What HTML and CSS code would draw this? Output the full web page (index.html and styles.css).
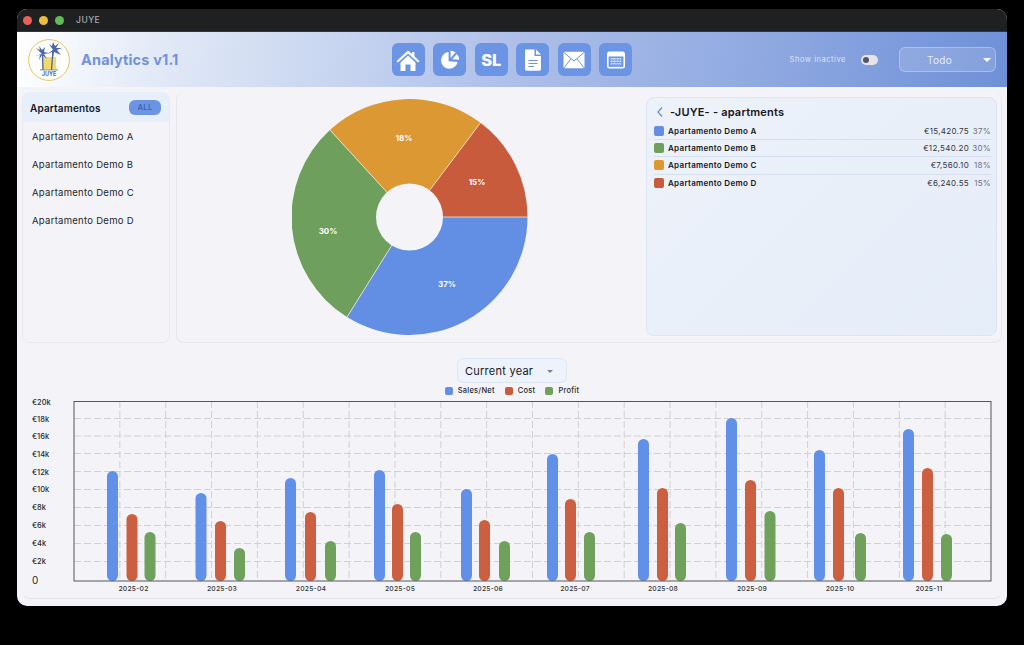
FILE: index.html
```html
<!DOCTYPE html>
<html lang="en">
<head>
<meta charset="utf-8">
<title>JUYE Analytics</title>
<link rel="stylesheet" href="styles.css">
</head>
<body>
<div class="window">
  <div class="titlebar">
    <span class="dot dot-red"></span><span class="dot dot-yellow"></span><span class="dot dot-green"></span>
    <span class="app-name">JUYE</span>
  </div>
  <header class="header">
    <div class="brand">
      <svg class="logo" viewBox="0 0 42 42">
        <circle cx="21" cy="21" r="20.4" fill="#fff" stroke="#e3c65a" stroke-width="1"/>
        <rect x="14" y="18" width="14" height="12" fill="#f2d968"/>
        <path d="M14.5 15 L15 31 M25 11 L23.5 31" stroke="#4d67a8" stroke-width="1.3" fill="none"/>
        <path d="M14 15 L8 9 L12 11 L11 7 L14 11 L17 8 L16 13 L21 14 L16 15 L19 20 L14 16 L11 21 L12 16 L7 17 Z" fill="#4d67a8"/>
        <path d="M25 11 L21 5 L24 7 L25 3 L27 7 L31 4 L28 9 L34 9 L29 11 L33 16 L26 13 L25 19 L24 13 L19 15 Z" fill="#4d67a8"/>
        <rect x="12" y="30.5" width="18" height="0.8" fill="#4d67a8"/>
        <text x="21" y="37" class="logo-text" text-anchor="middle">JUYE</text>
      </svg>
      <h1 class="app-title">Analytics v1.1</h1>
    </div>
    <nav class="nav">
      <a class="nav-btn"><svg viewBox="0 0 24 24"><path d="M12 2.5 L16 6.1 V4 H18.4 V8.3 L23.5 13 L22 14.6 L12 5.5 L2 14.6 L0.5 13 Z M4.5 14.5 L12 7.6 L19.5 14.5 V23 H14.5 V16.5 H9.5 V23 H4.5 Z" fill="#fff"/></svg></a>
      <a class="nav-btn"><svg viewBox="0 0 24 24"><path d="M10.6 4 A8.4 8.4 0 1 0 19.6 14 L10.6 13.2 Z" fill="#fff"/><path d="M12.6 2.4 A8.6 8.6 0 0 1 17.5 4.6 L12.6 10 Z M18.8 6 A8.6 8.6 0 0 1 21.2 11.8 L14.2 11.2 Z" fill="#fff"/></svg></a>
      <a class="nav-btn nav-text">SL</a>
      <a class="nav-btn"><svg viewBox="0 0 24 24"><path d="M5 1.5 H13.5 V8 H20 V21 A1.8 1.8 0 0 1 18.2 22.8 H5.8 A1.8 1.8 0 0 1 4 21 V2.5 A1 1 0 0 1 5 1.5 Z M15 1.5 L20 6.5 H15 Z" fill="#fff"/><path d="M7.5 12.5 H16.5 M7.5 15.5 H16.5 M7.5 18.5 H13" stroke="#6b94e4" stroke-width="1.2"/></svg></a>
      <a class="nav-btn"><svg viewBox="0 0 24 24"><rect x="1.5" y="3.8" width="21" height="16.5" rx="1.5" fill="#fff"/><path d="M2 4.6 L12 13 L22 4.6 M2 19.8 L9 10.8 M22 19.8 L15 10.8" stroke="#6b94e4" stroke-width="1" fill="none"/></svg></a>
      <a class="nav-btn"><svg viewBox="0 0 24 24"><rect x="3" y="3.5" width="18" height="17" rx="2.5" fill="#fff"/><rect x="4.6" y="8.5" width="14.8" height="10.4" fill="#6b94e4"/><path d="M6.5 11 H17.5 M6.5 13.5 H17.5 M6.5 16 H17.5 M8 10 V17.5 M10.7 10 V17.5 M13.3 10 V17.5 M16 10 V17.5" stroke="#fff" stroke-width="1" stroke-dasharray="1.2 1.2" fill="none"/></svg></a>
    </nav>
    <div class="header-tools">
      <span class="inactive-label">Show inactive</span>
      <span class="toggle"><span class="toggle-knob"></span></span>
      <div class="site-select"><span>Todo</span><i class="site-caret"></i></div>
    </div>
  </header>
  <main class="content">
    <section class="top-row">
      <aside class="sidebar">
        <div class="sidebar-head"><strong>Apartamentos</strong><span class="pill">ALL</span></div>
        <ul class="apt-list">
          <li>Apartamento Demo A</li>
          <li>Apartamento Demo B</li>
          <li>Apartamento Demo C</li>
          <li>Apartamento Demo D</li>
        </ul>
      </aside>
      <div class="pie-card">
        <div class="pie-wrap">
          <svg class="pie" viewBox="292 99 236 237">
            <path d="M409.5 217 H527.5 A118 118 0 0 1 347 317.1 Z" fill="#628ee3"/>
            <path d="M409.5 217 L347 317.1 A118 118 0 0 1 329.9 129.9 Z" fill="#6e9f5c"/>
            <path d="M409.5 217 L329.9 129.9 A118 118 0 0 1 480.5 122.8 Z" fill="#db9833"/>
            <path d="M409.5 217 L480.5 122.8 A118 118 0 0 1 527.5 217 Z" fill="#c85b3c"/>
            <path class="pie-sep" d="M409.5 217 L347 317.1 M409.5 217 L329.9 129.9 M409.5 217 L480.5 122.8 M409.5 217 H527.5"/>
            <circle cx="409.5" cy="217" r="33.5" fill="#f4f4f8"/>
            <text class="pie-label" x="447" y="287" text-anchor="middle">37%</text>
            <text class="pie-label" x="328" y="234" text-anchor="middle">30%</text>
            <text class="pie-label" x="404" y="141" text-anchor="middle">18%</text>
            <text class="pie-label" x="477" y="185" text-anchor="middle">15%</text>
          </svg>
        </div>
        <div class="details">
          <div class="details-title">
            <svg class="chev" viewBox="0 0 8 12"><path d="M6 1.5 L2 6 L6 10.5" fill="none" stroke="#6d8fd6" stroke-width="1.3"/></svg>
            <span>-JUYE- - apartments</span>
          </div>
          <div class="detail-row"><i class="swatch sw-blue"></i><b>Apartamento Demo A</b><span class="amount">€15,420.75</span><span class="pct">37%</span></div>
          <div class="detail-row"><i class="swatch sw-green"></i><b>Apartamento Demo B</b><span class="amount">€12,540.20</span><span class="pct">30%</span></div>
          <div class="detail-row"><i class="swatch sw-orange"></i><b>Apartamento Demo C</b><span class="amount">€7,560.10</span><span class="pct">18%</span></div>
          <div class="detail-row"><i class="swatch sw-red"></i><b>Apartamento Demo D</b><span class="amount">€6,240.55</span><span class="pct">15%</span></div>
        </div>
      </div>
    </section>
    <section class="chart-card">
      <div class="period"><span>Current year</span><i class="period-caret"></i></div>
      <div class="legend">
        <span class="legend-item"><i class="swatch-sm sw-blue"></i>Sales/Net</span>
        <span class="legend-item"><i class="swatch-sm sw-red"></i>Cost</span>
        <span class="legend-item"><i class="swatch-sm sw-green"></i>Profit</span>
      </div>
      <svg class="chart" viewBox="22 396 980 200">
        <path class="grid" d="M119.85 401V581M165.7 401V581M211.55 401V581M257.4 401V581M303.25 401V581M349.1 401V581M394.95 401V581M440.8 401V581M486.65 401V581M532.5 401V581M578.35 401V581M624.2 401V581M670.05 401V581M715.9 401V581M761.75 401V581M807.6 401V581M853.45 401V581M899.3 401V581M945.15 401V581"/>
        <path class="grid" d="M74 418.5H991M74 436H991M74 453.5H991M74 471.5H991M74 489.5H991M74 507.5H991M74 525.5H991M74 543.5H991M74 561.5H991"/>
        <g class="bars-blue">
          <rect x="107" y="471" width="11" height="110" rx="5.5"/><rect x="195.5" y="493" width="11" height="88" rx="5.5"/><rect x="285" y="478" width="11" height="103" rx="5.5"/><rect x="374" y="470" width="11" height="111" rx="5.5"/><rect x="461" y="489" width="11" height="92" rx="5.5"/><rect x="547" y="454" width="11" height="127" rx="5.5"/><rect x="638" y="439" width="11" height="142" rx="5.5"/><rect x="726" y="418" width="11" height="163" rx="5.5"/><rect x="814" y="450" width="11" height="131" rx="5.5"/><rect x="903" y="429" width="11" height="152" rx="5.5"/>
        </g>
        <g class="bars-red">
          <rect x="126.5" y="514" width="11" height="67" rx="5.5"/><rect x="215" y="521" width="11" height="60" rx="5.5"/><rect x="305" y="512" width="11" height="69" rx="5.5"/><rect x="392" y="504" width="11" height="77" rx="5.5"/><rect x="479" y="520" width="11" height="61" rx="5.5"/><rect x="565" y="499" width="11" height="82" rx="5.5"/><rect x="657" y="488" width="11" height="93" rx="5.5"/><rect x="745" y="480" width="11" height="101" rx="5.5"/><rect x="833" y="488" width="11" height="93" rx="5.5"/><rect x="922" y="468" width="11" height="113" rx="5.5"/>
        </g>
        <g class="bars-green">
          <rect x="144.5" y="532" width="11" height="49" rx="5.5"/><rect x="234" y="548" width="11" height="33" rx="5.5"/><rect x="325" y="541" width="11" height="40" rx="5.5"/><rect x="410" y="532" width="11" height="49" rx="5.5"/><rect x="499" y="541" width="11" height="40" rx="5.5"/><rect x="584" y="532" width="11" height="49" rx="5.5"/><rect x="675" y="523" width="11" height="58" rx="5.5"/><rect x="764.5" y="511" width="11" height="70" rx="5.5"/><rect x="855" y="533" width="11" height="48" rx="5.5"/><rect x="941" y="534" width="11" height="47" rx="5.5"/>
        </g>
        <rect class="plot" x="74" y="401.5" width="917" height="179.5"/>
        <g class="y-labels">
          <text x="32" y="405">€20k</text><text x="32" y="422">€18k</text><text x="32" y="439">€16k</text><text x="32" y="457">€14k</text><text x="32" y="475">€12k</text><text x="32" y="492">€10k</text><text x="32" y="510">€8k</text><text x="32" y="528">€6k</text><text x="32" y="546">€4k</text><text x="32" y="564">€2k</text>
          <text class="y-zero" x="32" y="584">0</text>
        </g>
        <g class="x-labels" text-anchor="middle">
          <text x="133.5" y="591">2025-02</text><text x="222" y="591">2025-03</text><text x="311" y="591">2025-04</text><text x="400" y="591">2025-05</text><text x="488" y="591">2025-06</text><text x="575" y="591">2025-07</text><text x="663" y="591">2025-08</text><text x="752" y="591">2025-09</text><text x="840" y="591">2025-10</text><text x="929" y="591">2025-11</text>
        </g>
      </svg>
    </section>
  </main>
</div>
</body>
</html>
```
FILE: styles.css
```css
* { box-sizing: border-box; }
html, body { margin: 0; height: 100%; background: #000; overflow: hidden; }
body { padding: 9px 17px 0; font-family: Inter, "Liberation Sans", sans-serif; color: #14161c; }

.window { width: 990px; height: 597px; border-radius: 10px; overflow: hidden; background: #f4f4f8; display: flex; flex-direction: column; }

.titlebar { height: 23px; flex: none; background: #1e2022; border-bottom: 1px solid #33363a; display: flex; align-items: center; padding-left: 6px; gap: 7px; }
.dot { width: 9px; height: 9px; border-radius: 50%; }
.dot-red { background: #e9605a; }
.dot-yellow { background: #efbc3c; }
.dot-green { background: #5fba58; }
.app-name { margin-left: 5px; font-size: 8.5px; font-weight: 500; letter-spacing: .5px; color: #a9abad; }

.header { height: 55px; flex: none; display: grid; grid-template-columns: 1fr auto 1fr; align-items: center; padding: 0 11px; background: linear-gradient(100deg, #fff 0%, #e3eaf7 14%, #cbd8f1 30%, #aebfe9 50%, #8fa9e1 75%, #6f90d8 100%); }
.brand { display: flex; align-items: center; gap: 11px; }
.logo { width: 42px; height: 42px; }
.logo-text { font-size: 5.5px; font-weight: 700; fill: #4d67a8; }
.app-title { margin: 0; font-size: 14.5px; font-weight: 700; letter-spacing: .15px; color: #6f93dd; }
.nav { display: flex; gap: 8.5px; }
.nav-btn { width: 33px; height: 33px; border-radius: 6px; background: #6b94e4; display: flex; align-items: center; justify-content: center; }
.nav-btn svg { width: 24px; height: 24px; }
.nav-text { font-size: 16.5px; font-weight: 800; color: #fff; }
.header-tools { display: flex; align-items: center; justify-content: flex-end; }
.inactive-label { font-size: 7.5px; letter-spacing: .55px; color: #dbe5f8; margin-right: 15px; }
.toggle { width: 17px; height: 10px; border-radius: 5px; background: #e4e4ea; display: flex; align-items: center; padding-left: 2px; margin-right: 21px; }
.toggle-knob { width: 6px; height: 6px; border-radius: 50%; background: #55575e; }
.site-select { width: 97px; height: 25px; border-radius: 6px; background: rgba(255,255,255,.14); border: 1px solid rgba(255,255,255,.28); display: flex; align-items: center; justify-content: center; position: relative; font-size: 10px; letter-spacing: .3px; color: #e6ecfa; padding-right: 16px; }
.site-caret { position: absolute; right: 4px; top: 10px; border: 4px solid transparent; border-top: 4px solid #fff; border-bottom: 0; }

.content { flex: 1; padding: 5px 5px 7px; display: flex; flex-direction: column; min-height: 0; }
.top-row { height: 251px; flex: none; display: flex; gap: 6px; }
.sidebar { width: 148px; flex: none; border: 1px solid #e9e9ee; border-top: 0; border-radius: 8px; overflow: hidden; }
.sidebar-head { height: 30px; background: #e6effa; display: flex; align-items: center; justify-content: space-between; padding: 1px 8px 0 7px; font-size: 10px; letter-spacing: .15px; }
.sidebar-head strong { font-weight: 600; }
.pill { width: 32px; height: 15px; border-radius: 6px; background: #6b94e4; color: #3f5fae; font-size: 8px; text-align: center; line-height: 15px; font-weight: 500; }
.apt-list { list-style: none; margin: 0; padding: 0 0 0 9px; }
.apt-list li { height: 28px; display: flex; align-items: center; font-size: 9.5px; letter-spacing: .28px; color: #22242a; }

.pie-card { flex: 1; border: 1px solid #e6e6ec; border-top: 0; border-radius: 8px; display: flex; padding: 5px 4px 6px 0; }
.pie-wrap { width: 469px; padding: 2px 0 0 115px; flex: none; }
.pie { width: 236px; height: 237px; display: block; }
.pie-sep { fill: none; stroke: #f0ead8; stroke-width: .8; }
.pie-label { font-size: 8px; font-weight: 700; fill: #fff; }
.details { flex: 1; border: 1px solid #dbe5f5; border-radius: 8px; padding: 7px 5px 0 7px; background: linear-gradient(135deg, #edf2fa, #e5edf9); }
.details-title { display: flex; align-items: center; height: 14px; margin-bottom: 4px; font-size: 11px; font-weight: 600; letter-spacing: .2px; }
.chev { width: 8px; height: 12px; margin-right: 6px; flex: none; margin-left: 2px; }
.detail-row { height: 17.2px; display: flex; align-items: center; font-size: 8px; letter-spacing: .3px; border-bottom: 1px solid #d5e0f1; }
.detail-row:last-child { border-bottom: 0; }
.detail-row b { font-weight: 600; margin-left: 4px; flex: 1; }
.amount { color: #33363d; }
.pct { width: 22px; text-align: right; color: #6d7078; }
.swatch { width: 10px; height: 10px; border-radius: 2px; flex: none; }
.sw-blue { background: #628ee3; }
.sw-green { background: #6e9f5c; }
.sw-orange { background: #db9833; }
.sw-red { background: #c85b3c; }

.chart-card { flex: 1; margin-top: 15px; min-height: 0; border-bottom: 1px solid #e2e2e8; border-radius: 0 0 8px 8px; display: flex; flex-direction: column; align-items: center; }
.period { width: 110px; height: 25px; flex: none; border: 1px solid #dde6f4; border-radius: 6px; background: #eef2fa; display: flex; align-items: center; padding-left: 7px; position: relative; font-size: 11px; letter-spacing: .25px; }
.period-caret { position: absolute; right: 13px; top: 11px; border: 3px solid transparent; border-top: 3px solid #7b7f88; border-bottom: 0; }
.legend { height: 11px; flex: none; display: flex; gap: 10px; margin-top: 2px; font-size: 7.5px; font-weight: 500; letter-spacing: .25px; color: #25272d; }
.legend-item { display: flex; align-items: center; gap: 5px; }
.swatch-sm { width: 8px; height: 8px; border-radius: 2px; }
.chart { width: 980px; height: 200px; flex: none; display: block; }
.grid { fill: none; stroke: #d0d0d6; stroke-width: 1; stroke-dasharray: 7 3; }
.plot { fill: none; stroke: #55565b; stroke-width: 1; }
.bars-blue { fill: #6090e8; }
.bars-red { fill: #cc5f40; }
.bars-green { fill: #6fa05c; }
.y-labels { font-size: 7.5px; fill: #26282e; font-weight: 500; }
.y-zero { font-size: 10px; font-weight: 400; }
.x-labels { font-size: 6.8px; letter-spacing: .2px; fill: #33353a; font-weight: 500; }
```
